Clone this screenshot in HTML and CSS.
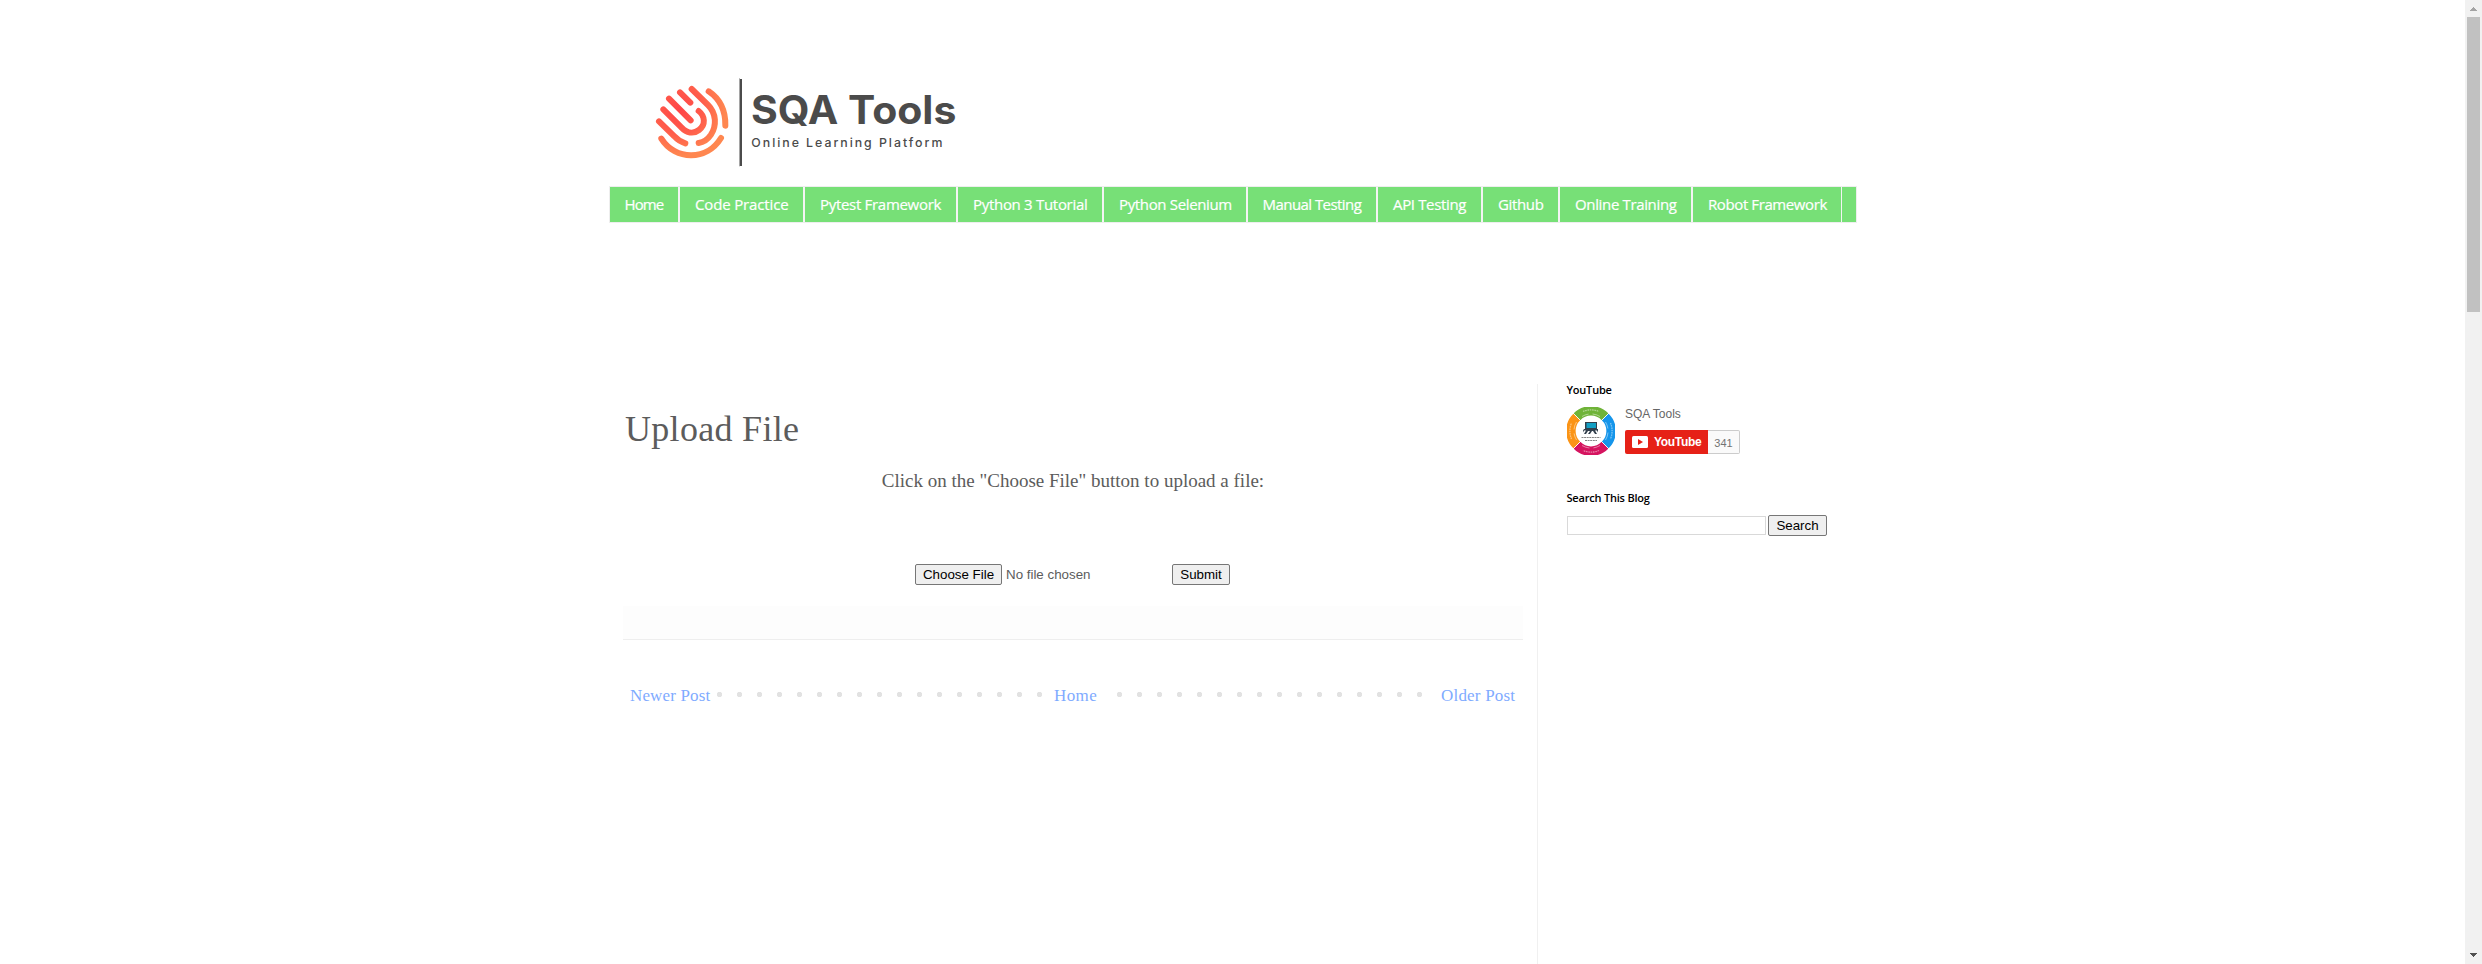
FILE: index.html
```html
<!DOCTYPE html>
<html lang="en">
<head>
<meta charset="utf-8">
<title>Upload File - SQA Tools</title>
<link rel="stylesheet" href="styles.css">
</head>
<body>
<div class="page">
  <header class="header">
    <svg class="logo" viewBox="0 0 1200 270" role="img" aria-label="SQA Tools">
      <defs>
        <radialGradient id="warm" gradientUnits="userSpaceOnUse" cx="238" cy="148" r="145">
          <stop offset="0" stop-color="#ff4447"/>
          <stop offset=".5" stop-color="#ff5c4b"/>
          <stop offset=".95" stop-color="#ff8750"/>
        </radialGradient>
      </defs>
      <g transform="translate(0 -50)">
        <g class="print" stroke="url(#warm)">
          <path d="M207 115L272 180"/>
          <path d="M240 96L271 127"/>
          <path d="M275 86L324 134C350 160 350 196 333 223C323 238 311 246 296 248"/>
          <path d="M190 147L244 201C260 218 280 222 297 209C318 193 315 167 296 152"/>
          <path d="M177 183L223 228C232 238 242 245 256 249"/>
          <path d="M184 235C226 302 321 302 363 233"/>
          <path d="M326 93C360 116 377 149 376 196"/>
        </g>
        <path class="rule-edge" d="M418.5 54V318"/>
        <path class="rule" d="M423 56V317"/>
        <text class="brand" x="453" y="191" textLength="616" lengthAdjust="spacingAndGlyphs">SQA Tools</text>
        <text class="slogan" x="454" y="261" textLength="573" lengthAdjust="spacing">Online Learning Platform</text>
      </g>
    </svg>
  </header>

  <nav class="tabs">
    <a class="tab t1"><span>Home</span></a>
    <a class="tab t2"><span>Code Practice</span></a>
    <a class="tab t3"><span>Pytest Framework</span></a>
    <a class="tab t4"><span>Python 3 Tutorial</span></a>
    <a class="tab t5"><span>Python Selenium</span></a>
    <a class="tab t6"><span>Manual Testing</span></a>
    <a class="tab t7"><span>API Testing</span></a>
    <a class="tab t8"><span>Github</span></a>
    <a class="tab t9"><span>Online Training</span></a>
    <a class="tab t10"><span>Robot Framework</span></a>
  </nav>

  <div class="columns">
    <main class="main">
      <h1 class="title">Upload File</h1>
      <p class="hint">Click on the "Choose File" button to upload a file:</p>
      <form class="upload">
        <button type="button" class="btn choose">Choose File</button>
        <span class="status">No file chosen</span>
        <button type="button" class="btn submit">Submit</button>
      </form>
      <div class="post-footer"></div>
      <div class="pager">
        <a class="newer">Newer Post</a>
        <a class="home">Home</a>
        <a class="older">Older Post</a>
      </div>
    </main>
    <aside class="side">
      <h2 class="side-title yt-title">YouTube</h2>
      <div class="channel">
        <svg class="avatar" viewBox="0 0 48 48">
          <g fill="none" stroke-width="9.500">
            <path stroke="#6fb338" d="M9.9 9.9A19.5 19.5 0 0 1 38.1 9.9"/>
            <path stroke="#1595ea" d="M38.1 9.9A19.5 19.5 0 0 1 38.1 38.1"/>
            <path stroke="#d5145f" d="M38.1 38.1A19.5 19.5 0 0 1 9.9 38.1"/>
            <path stroke="#fb9416" d="M9.9 38.1A19.5 19.5 0 0 1 9.9 9.9"/>
          </g>
          <g fill="none" stroke="#fff" stroke-opacity=".45" stroke-width="1.300">
            <path d="M16 4.500A21 21 0 0 1 32 4.500M43.500 16A21 21 0 0 1 43.500 32M32 43.500A21 21 0 0 1 16 43.500M4.500 32A21 21 0 0 1 4.500 16" stroke-dasharray="1.600 .7"/>
            <path d="M15 9.500A17 17 0 0 1 33 9.500M38.500 15A17 17 0 0 1 38.500 33M33 38.500A17 17 0 0 1 15 38.500M9.500 33A17 17 0 0 1 9.500 15" stroke-width="1" stroke-dasharray="7 4 8"/>
            <path stroke-opacity=".9" stroke-width="1" d="M6 6l8 8M42 6l-8 8M42 42l-8-8M6 42l8-8"/>
          </g>
          <path fill="#33404d" d="M18 15h12v7H18zM17 22h14v1.500l-1 2v-2h-2l2 3.500h-2l-2-3h-1l-2 3h-2l2-3h-2l-2 3h-2l2-3.500h-2v2l-1-2z"/>
          <path fill="#139fc4" d="M19.500 16h9.500v5h-9.500z"/>
          <path stroke="#777" stroke-width=".9" stroke-dasharray="2 .6" d="M14.500 30.500h19M18 33.500h12"/>
        </svg>
        <div class="channel-info">
          <div class="channel-name">SQA Tools</div>
          <div class="subscribe">
            <span class="yt-button">
              <svg class="yt-icon" viewBox="0 0 16 12"><rect width="16" height="12" rx="1.500" fill="#fff"/><path fill="#e62117" d="M6 3l5 3-5 3z"/></svg>
              <span>YouTube</span>
            </span>
            <span class="count">341</span>
          </div>
        </div>
      </div>
      <h2 class="side-title search-title">Search This Blog</h2>
      <form class="search">
        <input class="query" type="text" aria-label="Search">
        <button type="button" class="btn search-btn">Search</button>
      </form>
    </aside>
  </div>
</div>
<div class="scrollbar">
  <svg class="arrow" viewBox="0 0 17 17" shape-rendering="crispEdges"><path fill="#a3a3a3" d="M8 7h1v1h1v1h1v1h1v1H5v-1h1V9h1V8h1z"/></svg>
  <div class="thumb"></div>
  <svg class="arrow down" viewBox="0 0 17 17" shape-rendering="crispEdges"><path fill="#505050" d="M5 6h7v1h-1v1h-1v1H9v1H8V9H7V8H6V7H5z"/></svg>
</div>
</body>
</html>
```
FILE: styles.css
```css
* { box-sizing: border-box; }
body {
  margin: 0;
  height: 964px;
  overflow: hidden;
  display: flex;
  background: #fff;
  color: #5c5c5c;
  font-family: "Liberation Serif", serif;
}
.page { flex: 1; padding-left: 609px; }
.header { height: 186px; padding-top: 77px; margin-left: -9px; }
.logo { display: block; width: 400px; height: 90px; }
.print path { fill: none; stroke-width: 18; stroke-linecap: round; }
.rule { stroke: #4b4b4b; stroke-width: 6; }
.rule-edge { stroke: #a5a5a5; stroke-width: 3; }
.brand { font: 700 117px Inter, sans-serif; fill: #4b4b4b; }
.slogan { font: 500 37px Inter, sans-serif; fill: #4b4b4b; }

.tabs {
  display: flex;
  width: 1248px;
  height: 37px;
  border: 1px solid #eee;
  background: #77e077;
}
.tab {
  padding-left: 15px;
  border-right: 2px solid #f4f4f4;
  color: #fff;
  font: 500 15px/35px "Open Sans", sans-serif;
  -webkit-text-stroke: 0.2px #fff;
  white-space: nowrap;
}
.t1 { width: 70px; padding-left: 14.5px; letter-spacing: -0.9px; }
.t2 { width: 125px; letter-spacing: -0.15px; }
.t3 { width: 153px; letter-spacing: -0.3px; }
.t4 { width: 146px; letter-spacing: -0.3px; }
.t5 { width: 144px; letter-spacing: -0.35px; }
.t6 { width: 130px; padding-left: 14.5px; letter-spacing: -0.55px; }
.t7 { width: 105px; letter-spacing: -0.35px; }
.t8 { width: 77px; letter-spacing: -0.35px; }
.t9 { width: 133px; letter-spacing: -0.35px; }
.t10 { width: 149px; border-right-width: 1px; letter-spacing: -0.4px; }

.columns { display: flex; margin-top: 161px; height: 580px; }
.main { width: 928px; padding-left: 14px; }
.title {
  margin: 23px 0 0 2px;
  font-size: 36px;
  font-weight: 400;
  line-height: 44px;
  letter-spacing: 0.3px;
}
.hint {
  margin: 18px 0 0;
  width: 900px;
  text-align: center;
  font-size: 19px;
  line-height: 24px;
}
.upload { display: flex; align-items: center; margin: 71px 0 0 292px; height: 21px; }
.btn {
  height: 21px;
  padding: 0;
  border: 1px solid #767676;
  border-radius: 2px;
  background: #efefef;
  color: #000;
  font: 13.333px/17px "Liberation Sans", sans-serif;
}
.choose { width: 87px; }
.status { margin-left: 4px; width: 166px; font: 13.333px/19px "Liberation Sans", sans-serif; }
.submit { width: 58px; }
.post-footer { margin-top: 21px; width: 900px; height: 34px; background: #fdfdfd; border-bottom: 1px solid #eee; }
.pager {
  display: flex;
  margin-top: 44px;
  width: 900px;
  color: #7fabff;
  font-size: 17px;
  line-height: 24px;
  white-space: nowrap;
  background: radial-gradient(circle at 10.5px 10.5px, #e2e2e2 2.3px, transparent 3px) 86px 0 / 20px 24px repeat-x;
}
.pager a { background: #fff; }
.newer { width: 92px; padding-left: 7px; letter-spacing: 0.15px; }
.home { width: 60px; margin-left: 334px; padding-left: 5px; letter-spacing: 0.4px; }
.older { width: 86px; margin-left: auto; padding-left: 4px; letter-spacing: 0.2px; }

.side { flex: 1; padding-left: 29px; border-left: 1px solid #f0f0f0; }
.side-title {
  margin: -1px 0 0 -0.5px;
  color: #000;
  font: 600 11px/14px "Open Sans", sans-serif;
  letter-spacing: -0.2px;
}
.channel { display: flex; gap: 10px; margin-top: 10px; height: 48px; }
.avatar { width: 48px; height: 48px; }
.channel-name { font: 12px/14px "Liberation Sans", sans-serif; color: #666; }
.subscribe { display: flex; margin-top: 9px; height: 24px; }
.yt-button {
  display: flex;
  align-items: center;
  gap: 6px;
  width: 83px;
  padding-left: 7px;
  background: #e62117;
  border-radius: 2px 0 0 2px;
  color: #fff;
  font: 700 12px/24px "Liberation Sans", sans-serif;
  letter-spacing: -0.3px;
}
.yt-icon { width: 16px; height: 12px; }
.count {
  width: 32px;
  border: 1px solid #ccc;
  border-left: 0;
  border-radius: 0 2px 2px 0;
  background: #fafafa;
  color: #737373;
  text-align: center;
  font: 11px/25px "Liberation Sans", sans-serif;
}
.search-title { margin-top: 36px; }
.search { display: flex; align-items: center; margin-top: 10px; }
.query { width: 199px; height: 19px; margin: 0 2px 0 0; padding: 0; border: 1px solid #d9d9d9; background: #fff; }
.search-btn { width: 59px; }

.scrollbar { width: 17px; background: #f1f1f1; display: flex; flex-direction: column; }
.arrow { width: 17px; height: 17px; display: block; }
.thumb { margin-left: 2px; width: 13px; height: 295px; background: #c1c1c1; }
.down { margin-top: auto; }
```
